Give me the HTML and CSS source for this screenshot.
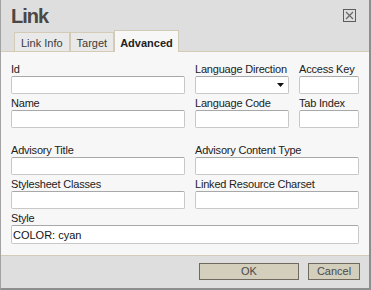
FILE: index.html
```html
<!DOCTYPE html>
<html lang="en">
<head>
    <meta charset="UTF-8">
    <title>Link</title>
    <link rel="stylesheet" href="styles.css">
</head>
<body>
    <div class="dialog">
        <div class="head">
            <div class="title-row">
                <span class="title">Link</span>
                <span class="close">
                    <svg width="13" height="13" viewBox="0 0 13 13">
                        <rect x="0.5" y="0.5" width="12" height="12" fill="none" stroke="#5c5c5c"/>
                        <path d="M3 3 L10 10 M10 3 L3 10" stroke="#6a6a6a" stroke-width="1.3"/>
                    </svg>
                </span>
            </div>
            <div class="tabs">
                <span class="tab">Link Info</span>
                <span class="tab">Target</span>
                <span class="tab active">Advanced</span>
            </div>
        </div>
        <div class="panel">
            <div class="grid">
                <div class="field">
                    <label>Id</label>
                    <input type="text" class="input">
                </div>
                <div class="field">
                    <label>Language Direction</label>
                    <div class="input select">
                        <svg width="7" height="4" viewBox="0 0 7 4"><polygon points="0,0 7,0 3.5,4" fill="#111"/></svg>
                    </div>
                </div>
                <div class="field">
                    <label>Access Key</label>
                    <input type="text" class="input">
                </div>
                <div class="field">
                    <label>Name</label>
                    <input type="text" class="input">
                </div>
                <div class="field">
                    <label>Language Code</label>
                    <input type="text" class="input">
                </div>
                <div class="field">
                    <label>Tab Index</label>
                    <input type="text" class="input">
                </div>
            </div>
            <div class="grid second">
                <div class="field">
                    <label>Advisory Title</label>
                    <input type="text" class="input">
                </div>
                <div class="field wide">
                    <label>Advisory Content Type</label>
                    <input type="text" class="input">
                </div>
                <div class="field">
                    <label>Stylesheet Classes</label>
                    <input type="text" class="input">
                </div>
                <div class="field wide">
                    <label>Linked Resource Charset</label>
                    <input type="text" class="input">
                </div>
                <div class="field full">
                    <label>Style</label>
                    <input type="text" class="input tall" value="COLOR: cyan">
                </div>
            </div>
        </div>
        <div class="foot">
            <button class="btn ok">OK</button>
            <button class="btn cancel">Cancel</button>
        </div>
    </div>
</body>
</html>
```

FILE: styles.css
```css
body{
    margin: 0;
    font-family: "Liberation Sans", Arial, sans-serif;
    font-size: 11px;
    color: #222222;
}
.dialog{
    width: 368px;
    height: 288px;
    border-left: 1px solid #a2a2a2;
    border-right: 2px solid #8e8e8e;
    border-bottom: 2px solid #8e8e8e;
    background: #dedede;
    display: flex;
    flex-direction: column;
}
.head{
    padding-top: 4px;
}
.title-row{
    display: flex;
    justify-content: space-between;
    align-items: flex-start;
    height: 24px;
    margin-bottom: 2px;
    padding: 0 13px 0 10px;
}
.title{
    font-size: 20px;
    font-weight: bold;
    line-height: 24px;
    letter-spacing: -1px;
    color: #4a4744;
}
.close{
    margin-top: 5px;
    display: flex;
}
.tabs{
    display: flex;
    align-items: flex-end;
    height: 22px;
    margin-bottom: -1px;
    padding-left: 13px;
}
.tab{
    height: 19px;
    margin-bottom: 1px;
    box-sizing: border-box;
    padding: 2px 6px 0 6px;
    line-height: 16px;
    color: #3a3a3a;
    background: #e9e9e9;
    border: 1px solid #d3cbb6;
    border-bottom: none;
}
.tab.active{
    height: 22px;
    margin-bottom: 0;
    padding: 4px 5px 0 5px;
    font-weight: bold;
    color: #222222;
    background: #f7f7f7;
    position: relative;
    z-index: 1;
}
.panel{
    height: 193px;
    background: #f7f7f7;
    border-top: 1px solid #d3cbb6;
    padding: 10px 9px 0 10px;
}
.grid{
    display: grid;
    grid-template-columns: 174px 94px 60px;
    column-gap: 10px;
    row-gap: 2px;
}
.grid.second{
    margin-top: 15px;
}
.field{
    display: flex;
    flex-direction: column;
}
.field.wide{
    grid-column: span 2;
}
.field.full{
    grid-column: span 3;
}
.field label{
    height: 14px;
    line-height: 14px;
    letter-spacing: -0.2px;
    white-space: nowrap;
}
.input{
    box-sizing: border-box;
    width: 100%;
    height: 18px;
    margin: 0;
    padding: 0 1px;
    font-family: inherit;
    font-size: 11px;
    color: #111111;
    background: #ffffff;
    border: 1px solid #c8c8c8;
    border-top-color: #a8a8a8;
    border-radius: 2px;
    outline: none;
}
.input.tall{
    height: 19px;
}
.select{
    display: flex;
    align-items: center;
    justify-content: flex-end;
    padding-right: 4px;
}
.foot{
    flex: 1;
    border-top: 1px solid #d3cbb6;
    display: flex;
    justify-content: flex-end;
    align-items: flex-start;
    gap: 9px;
    padding: 7px 9px 0 0;
}
.btn{
    height: 17px;
    margin: 0;
    padding: 0;
    font-family: inherit;
    font-size: 11px;
    line-height: 15px;
    color: #4a4a4a;
    background: #d4cebc;
    border: 1px solid #6f6a5d;
}
.btn.ok{
    width: 100px;
}
.btn.cancel{
    width: 52px;
}
```
